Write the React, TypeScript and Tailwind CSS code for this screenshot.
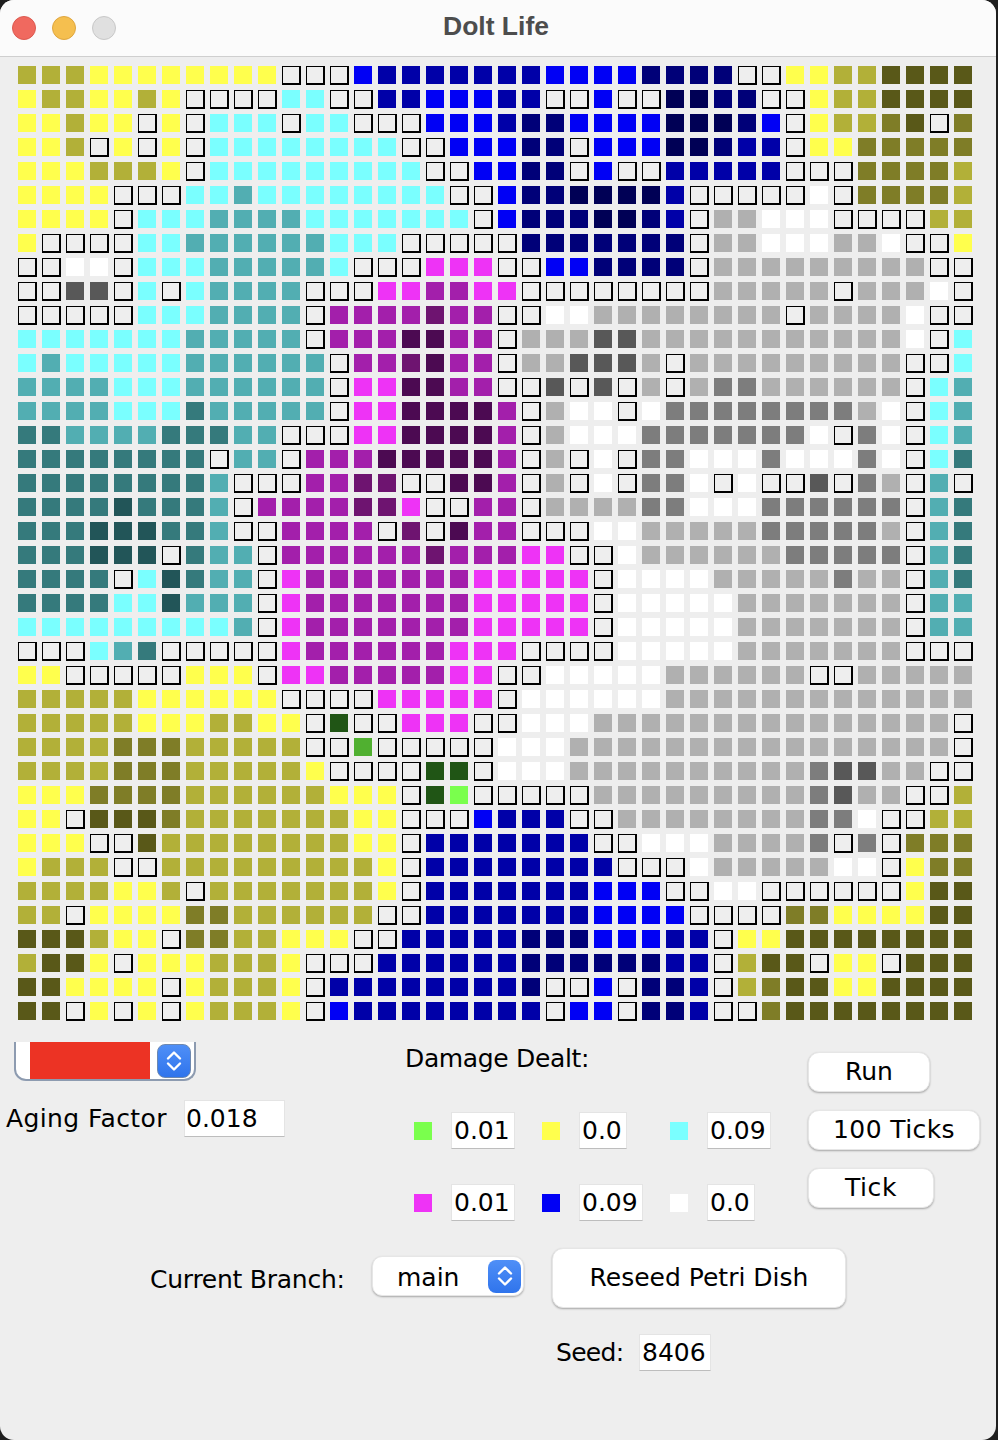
// one row per line of the dish, spaces are only there to make columns easier to check
const ROWS = [
  "oooYYYYYYYYEEE BbbbbbbbBBBB nnnnEEYYooDDDD",
  "YooYYoYEEEECCE EbbBBBbbEEBEE NNnnEEYooDDDD",
  "YYoYYEYECCCECC EEEBBBbnnBBBB NNNnBEYoodDEd",
  "YYoEYEYECCCCCC CCEEBBBnnEBBB NNnbbEYYddddd",
  "YYYoooYECCCCCC CCCEEBBnnEBEE bbbbbEEEddddo",
  "YYYYEEECCcCCCC CCCCEEBnnNNNN bEEEEEWEddddo",
  "YYYYECCCccccCC CCCCCEBnnnNNn bEggWWWEEEEoo",
  "YEEEECCccccccC CCEEEEEnnnnnn nEggWWWggWEEY",
  "EEWWECCCcccccC EEEMMMEEBBnnn nEgggggggggEE",
  "EEHHECECccccEE EMMmmMMEEEEEE EEgggggEgggWE",
  "EEEEECCCccccEm mmmpmmEEWWggg gggggEggggWEE",
  "CCCCCCCcccccEm mmPPmmEgggHHg ggggggggggWEC",
  "CcCCCCCccccccE mmpPmmEggHHHg EgggggggggEEC",
  "ccccCCCccccccE MMPPmmEEHEHEg EghhggggggECc",
  "ccccCCCtcccccE MMPPPPmEgWWEW hhhhhhhhgWECc",
  "ttcccctttccEEE MMPPPPmEgWWWh hhhhhhWEhWECc",
  "ttttttttEccEmm mPPPPPmEgEWEh hWWWhWWWhWECt",
  "ttttttttcEEEmm ppEEPPmEgEWEh hWEWEEHEhgEcE",
  "ttttTtttcEmmmm ppMEEmmEggggh hWWWhhhhhhEct",
  "tttTTTttcEEmmm mEpEPmmEEEWWg gggghhhhhgEct",
  "tttTTTEtccEmmm mmmpmmmMMEEWg ggggghhhhhEct",
  "ttttECTtccEMmm mmmmmMMMMMEWW WWggggghggEct",
  "ttttCCTcccEMmm mmmmmMMMMMEWW WWWgggggggEcc",
  "CCCCCCCCCcEMmm mmmmmMMMMMEWW WWWgggggggEcc",
  "EEECctEEEEEMmm mmmmMMMEEEEWW WWWgggggggEEE",
  "YYEEEEEYYYEMMm mmmmMMEEWWWWW ggggggEEggggg",
  "oooooYYYYYYEEE EMMMMMEWWWWWW ggggggggggggg",
  "oooooYYYooYYEF EEMMMEEWWWggg ggggggggggggE",
  "oooodddoooooEE fEEEEEWWWgggg ggggggggggggE",
  "oooodddoooooYE EEEFFEWWWgggg gggggghHHggEE",
  "YYYddddooooooY YYEFGEEEEEggg gggggghHggEEo",
  "YYEDDDdooooooo YYEEEBbbbEEgg gggggghhWEEoo",
  "YYYEEDoooooooo YYEbbbbbbbEEW WWgggghEhEddd",
  "YoooEEoooooooo oYEbbbbbbbbEE EWgggggWWEYdd",
  "ooooYYoEoooooo oYEbbbbbbbBBB EEWWEEEEEEYDD",
  "ooEYYYYddooooo oEEbbbbbbbBBB BEEEEddYYYYDD",
  "DDDoYYEddooYYY EEbbbbbnnnBBB bbEYYDDDDDDDD",
  "oDDYEYYYoooYEE Ebbbbbbnnnnnn bbEoDDEYYEDDD",
  "DDYYYYEYoooYEb bbbbbbbnEEBEn nbEodDDYYDDDD",
  "DDEYEYEYoooYEB bbbbbbbbEBBEn nbEEdDDDDDDDD",
];

const CELL_CLASS: Record<string, string> = {
  Y: "bg-[#ffff4d]",
  o: "bg-[#b2b038]",
  d: "bg-[#7f7d27]",
  D: "bg-[#595818]",
  C: "bg-[#7affff]",
  c: "bg-[#52aeb2]",
  t: "bg-[#357a7c]",
  T: "bg-[#225558]",
  B: "bg-[#0000f5]",
  b: "bg-[#0000a8]",
  n: "bg-[#000078]",
  N: "bg-[#000055]",
  M: "bg-[#ee33f6]",
  m: "bg-[#a31fab]",
  p: "bg-[#6e1470]",
  P: "bg-[#4c0a52]",
  W: "bg-white",
  g: "bg-[#b0b0b0]",
  h: "bg-[#7d7d7d]",
  H: "bg-[#585858]",
  G: "bg-[#7aff4d]",
  f: "bg-[#50b030]",
  F: "bg-[#205515]",
};

function Cell({ kind }: { kind: string }) {
  if (kind === "E") {
    return (
      <div className="w-[19px] h-[19px] box-border border border-black border-r-2 border-b-2 bg-[#eeeeee]" />
    );
  }
  return <div className={`w-[18px] h-[18px] ${CELL_CLASS[kind]}`} />;
}

function Field({ value, width, pad = "pl-[2px]" }: { value: string; width: string; pad?: string }) {
  return (
    <div
      className={`${width} ${pad} h-[37px] flex items-center bg-white border border-[#e4e4e4] border-b-[#bdbdbd] text-[25px] leading-none text-black`}
    >
      {value}
    </div>
  );
}

function Stat({ color, value, width }: { color: string; value: string; width: string }) {
  return (
    <div className="flex items-center">
      <div className={`w-[18px] h-[18px] ${color}`} />
      <div className="ml-[19px]">
        <Field value={value} width={width} />
      </div>
    </div>
  );
}

function SpinIcon({ className }: { className: string }) {
  return (
    <div className={`${className} flex items-center justify-center bg-gradient-to-b from-[#4f8ff7] to-[#2f74ec]`}>
      <svg width="18" height="24" viewBox="0 0 18 24" fill="none" stroke="white" strokeWidth="2.4" strokeLinecap="round" strokeLinejoin="round">
        <path d="M3 9.5 L9 3.5 L15 9.5" />
        <path d="M3 14.5 L9 20.5 L15 14.5" />
      </svg>
    </div>
  );
}

function Button({ label, className }: { label: string; className: string }) {
  return (
    <button
      className={`${className} pb-[2px] bg-white rounded-[11px] border border-[#e6e6e6] shadow-[0_1px_2px_rgba(0,0,0,0.3)] text-[25px] leading-none text-black`}
    >
      {label}
    </button>
  );
}

export default function App() {
  return (
    <div className="w-[998px] h-[1440px] bg-[#1f1f1f] overflow-hidden font-['DejaVu_Sans',sans-serif]">
      <div className="w-[996px] h-[1440px] bg-[#eeeeee] rounded-t-[14px] rounded-b-[14px] overflow-hidden">
        {/* Title bar */}
        <div className="relative h-[57px] bg-[#fbfbfb] border-b border-[#cfcfcf] flex items-center justify-center">
          <div className="absolute left-[12px] top-[16px] flex gap-[16px]">
            <div className="w-[24px] h-[24px] rounded-full bg-[#f0695f] border border-[#dc5a50]" />
            <div className="w-[24px] h-[24px] rounded-full bg-[#f5bf4f] border border-[#dfa63f]" />
            <div className="w-[24px] h-[24px] rounded-full bg-[#e0e0e0] border border-[#c8c8c8]" />
          </div>
          <span className="font-['Liberation_Sans',sans-serif] font-bold text-[26.5px] text-[#4d4d4d] -mt-[2px] -ml-[4px]">Dolt Life</span>
        </div>

        {/* Petri dish */}
        <div className="pl-[18px] pt-[9px] grid grid-cols-[repeat(40,24px)] grid-rows-[repeat(40,24px)]">
          {ROWS.flatMap((row, y) =>
            row
              .replace(/ /g, "")
              .split("")
              .map((kind, x) => <Cell key={`${x}-${y}`} kind={kind} />)
          )}
        </div>

        {/* Controls */}
        <div className="-mt-[6px] h-[228px] flex items-start">
          <div className="w-[405px] shrink-0">
            <div className="relative ml-[14px] mt-[22px] w-[182px] h-[39px] bg-white rounded-b-[12px] border-l-2 border-r-2 border-b-2 border-[#8d9bb0] flex items-stretch overflow-hidden">
              <div className="ml-[14px] w-[120px] bg-[#ec3324]" />
              <div className="ml-[7px] flex items-center">
                <SpinIcon className="w-[34px] h-[34px] rounded-[8px] border border-[#6d88b0]" />
              </div>
            </div>
            <div className="ml-[6px] mt-[19px] flex items-center">
              <span className="w-[178px] text-[25px] tracking-[0.4px] leading-none text-black">Aging Factor</span>
              <Field value="0.018" width="w-[101px]" pad="pl-[1px]" />
            </div>
          </div>

          <div className="w-[403px] shrink-0">
            <div className="mt-[25px] text-[25px] -tracking-[0.35px] leading-[28px] text-black">Damage Dealt:</div>
            <div className="mt-[39px] ml-[9px] grid grid-cols-[128px_128px_auto] grid-rows-[37px_37px] gap-y-[35px] justify-start">
              <Stat color="bg-[#7aff4d]" value="0.01" width="w-[64px]" />
              <Stat color="bg-[#ffff4d]" value="0.0" width="w-[48px]" />
              <Stat color="bg-[#7affff]" value="0.09" width="w-[64px]" />
              <Stat color="bg-[#ee33f6]" value="0.01" width="w-[64px]" />
              <Stat color="bg-[#0000f5]" value="0.09" width="w-[64px]" />
              <Stat color="bg-white" value="0.0" width="w-[48px]" />
            </div>
          </div>

          <div className="flex flex-col items-start gap-[18px] mt-[32px]">
            <Button label="Run" className="w-[122px] h-[40px]" />
            <Button label="100 Ticks" className="w-[172px] h-[40px] tracking-[0.4px]" />
            <Button label="Tick" className="w-[126px] h-[40px] tracking-[0.6px]" />
          </div>
        </div>

        <div className="pl-[150px] flex items-center">
          <span className="w-[222px] mt-[2px] text-[25px] -tracking-[0.25px] leading-none text-black">Current Branch:</span>
          <div className="w-[152px] h-[40px] -mt-[4px] bg-white rounded-[10px] border border-[#e6e6e6] shadow-[0_1px_2px_rgba(0,0,0,0.3)] flex items-center justify-between pl-[24px] pr-[2px]">
            <span className="mt-[2px] text-[25px] leading-none text-black">main</span>
            <SpinIcon className="w-[33px] h-[33px] rounded-[8px]" />
          </div>
          <Button label="Reseed Petri Dish" className="ml-[28px] w-[294px] h-[60px]" />
        </div>

        <div className="mt-[26px] pl-[556px] flex items-center">
          <span className="w-[83px] text-[25px] -tracking-[0.7px] leading-none text-black">Seed:</span>
          <Field value="8406" width="w-[72px]" />
        </div>
      </div>
    </div>
  );
}
